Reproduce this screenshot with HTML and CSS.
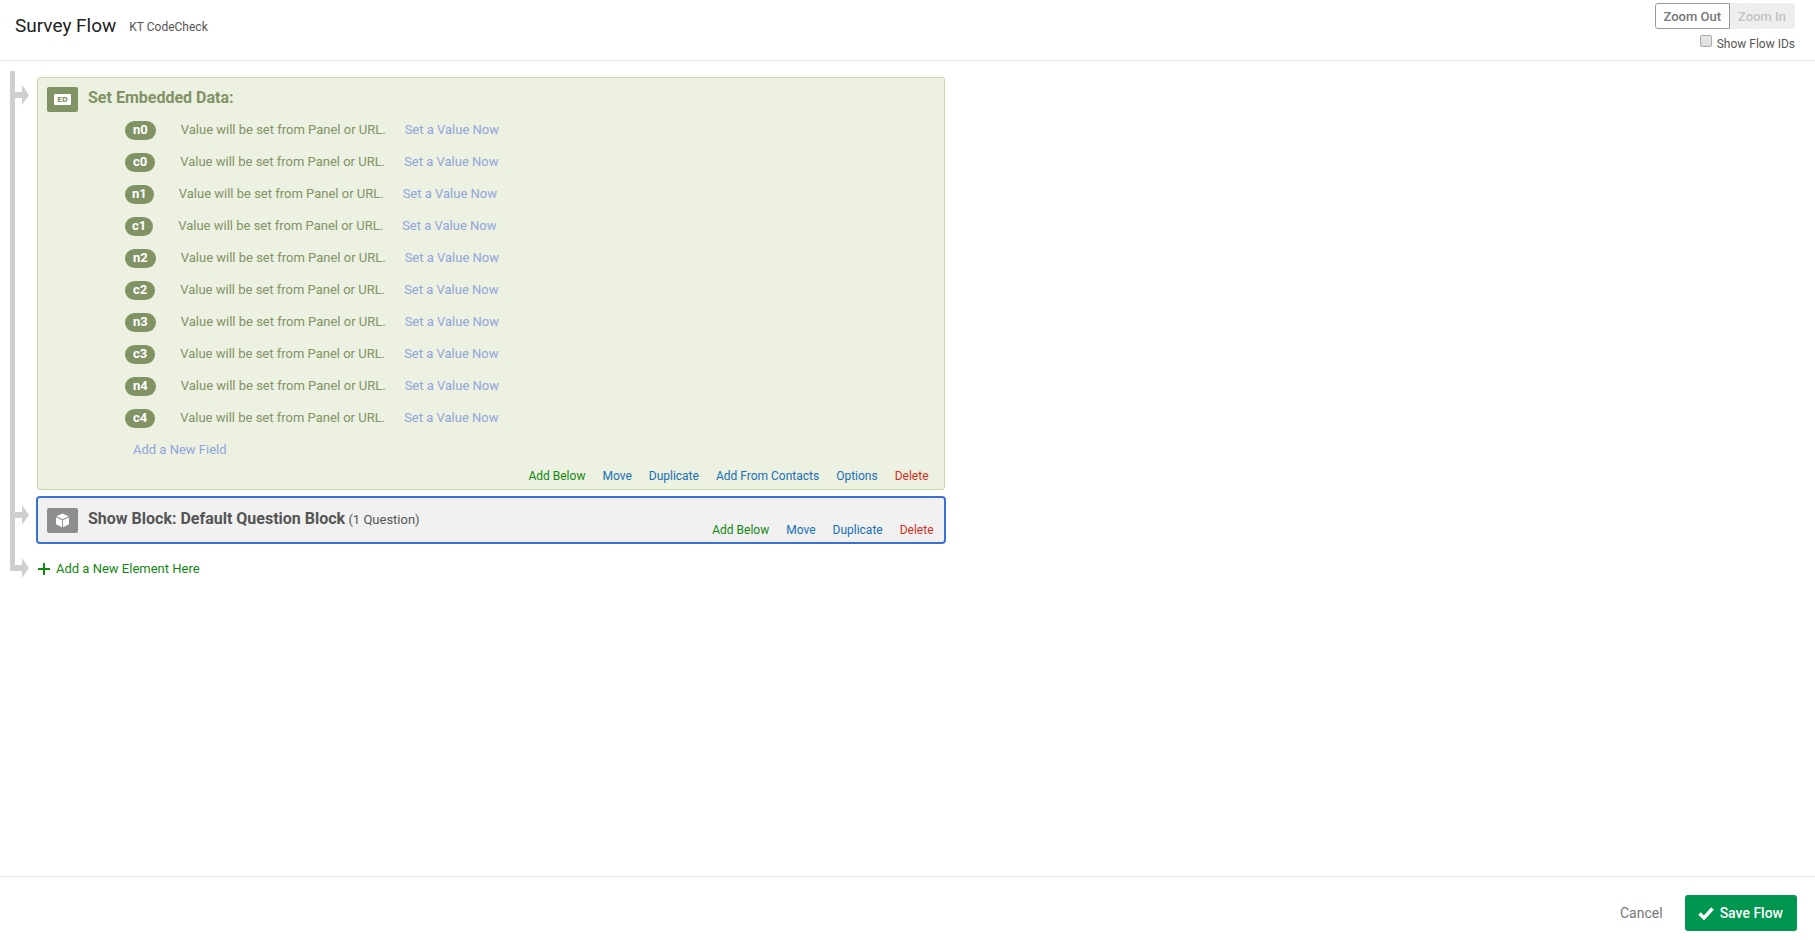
FILE: index.html
```html
<!DOCTYPE html>
<html lang="en">
<head>
<meta charset="utf-8">
<title>Survey Flow</title>
<link rel="stylesheet" href="styles.css">
</head>
<body>
<header class="header">
  <h1 class="title">Survey Flow</h1>
  <span class="survey-name">KT CodeCheck</span>
  <div class="tools">
    <div class="zoom">
      <button class="zoom-btn" type="button">Zoom Out</button>
      <button class="zoom-btn" type="button" disabled>Zoom In</button>
    </div>
    <label class="show-ids" for="ids"><input class="check" type="checkbox" id="ids">Show Flow IDs</label>
  </div>
</header>
<main class="content">
  <ul class="tree">
    <li class="node">
      <div class="rail"><svg class="arrow" width="14" height="20" viewBox="0 0 14 20"><path d="M0 7h7V0l7 10-7 10v-7H0z"/></svg></div>
      <section class="block block-data">
        <div class="block-head">
          <svg class="icon" width="31" height="25" viewBox="0 0 31 25"><rect width="31" height="25" rx="2" fill="#819365"/><rect x="7" y="7" width="17" height="11" rx="1" fill="#fff"/><text class="icon-text" x="15.5" y="15" text-anchor="middle">ED</text></svg>
          <h2 class="block-title">Set Embedded Data:</h2>
        </div>
        <ul class="fields">
          <li class="field"><button class="pill" type="button">n0</button><span class="value">Value will be set from Panel or URL.</span><a class="soft" href="#">Set a Value Now</a></li>
          <li class="field"><button class="pill" type="button">c0</button><span class="value">Value will be set from Panel or URL.</span><a class="soft" href="#">Set a Value Now</a></li>
          <li class="field"><button class="pill pill-narrow" type="button">n1</button><span class="value">Value will be set from Panel or URL.</span><a class="soft" href="#">Set a Value Now</a></li>
          <li class="field"><button class="pill pill-narrow" type="button">c1</button><span class="value">Value will be set from Panel or URL.</span><a class="soft" href="#">Set a Value Now</a></li>
          <li class="field"><button class="pill" type="button">n2</button><span class="value">Value will be set from Panel or URL.</span><a class="soft" href="#">Set a Value Now</a></li>
          <li class="field"><button class="pill" type="button">c2</button><span class="value">Value will be set from Panel or URL.</span><a class="soft" href="#">Set a Value Now</a></li>
          <li class="field"><button class="pill" type="button">n3</button><span class="value">Value will be set from Panel or URL.</span><a class="soft" href="#">Set a Value Now</a></li>
          <li class="field"><button class="pill" type="button">c3</button><span class="value">Value will be set from Panel or URL.</span><a class="soft" href="#">Set a Value Now</a></li>
          <li class="field"><button class="pill" type="button">n4</button><span class="value">Value will be set from Panel or URL.</span><a class="soft" href="#">Set a Value Now</a></li>
          <li class="field"><button class="pill" type="button">c4</button><span class="value">Value will be set from Panel or URL.</span><a class="soft" href="#">Set a Value Now</a></li>
          <li class="field field-new"><a class="soft" href="#">Add a New Field</a></li>
        </ul>
        <nav class="actions">
          <a class="add" href="#">Add Below</a><a href="#">Move</a><a href="#">Duplicate</a><a href="#">Add From Contacts</a><a href="#">Options</a><a class="delete" href="#">Delete</a>
        </nav>
      </section>
    </li>
    <li class="node">
      <div class="rail"><svg class="arrow" width="14" height="20" viewBox="0 0 14 20"><path d="M0 7h7V0l7 10-7 10v-7H0z"/></svg></div>
      <section class="block block-show">
        <div class="block-head">
          <svg class="icon" width="31" height="25" viewBox="0 0 31 25"><rect width="31" height="25" rx="2" fill="#8e8e8e"/><path d="M15.500 5.500L21.500 8.300L15.500 11.300L9.500 8.300z M9 9.300L15 12.200V19.200L9 16.300z M22 9.300L16 12.200V19.200L22 16.300z" fill="#fff"/></svg>
          <h2 class="block-title">Show Block: Default Question Block<span class="count"> (1 Question)</span></h2>
        </div>
        <nav class="actions">
          <a class="add" href="#">Add Below</a><a href="#">Move</a><a href="#">Duplicate</a><a class="delete" href="#">Delete</a>
        </nav>
      </section>
    </li>
    <li class="node node-last">
      <div class="rail"><svg class="arrow" width="14" height="20" viewBox="0 0 14 20"><path d="M0 7h7V0l7 10-7 10v-7H0z"/></svg></div>
      <a class="new-element" href="#"><svg width="12" height="12" viewBox="0 0 12 12"><path d="M5 0h2v5h5v2H7v5H5V7H0V5h5z" fill="#128712"/></svg>Add a New Element Here</a>
    </li>
  </ul>
</main>
<footer class="footer">
  <button class="cancel" type="button">Cancel</button>
  <button class="save" type="button"><svg width="16" height="13" viewBox="0 0 16 13"><path d="M1.500 6.500L6 11L14.500 1.500" fill="none" stroke="#fff" stroke-width="3.400"/></svg>Save Flow</button>
</footer>
</body>
</html>
```
FILE: styles.css
```css
* { box-sizing: border-box; }
body {
  margin: 0;
  min-height: 100vh;
  display: flex;
  flex-direction: column;
  background: #fff;
  color: #555;
  font: 13px/16px Roboto, "Liberation Sans", sans-serif;
}
h1, h2, ul { margin: 0; padding: 0; }
ul { list-style: none; }
button { font: inherit; cursor: pointer; }
a { color: #1970b8; text-decoration: none; }
svg { display: block; flex: none; }

.header {
  display: flex;
  align-items: flex-start;
  padding: 3px 20px 0 15px;
  height: 61px;
  border-bottom: 1px solid #e5e5e5;
}
.title {
  margin: 11px 13px 0 0;
  color: #222;
  font-size: 19px;
  font-weight: 400;
  line-height: 24px;
}
.survey-name { margin-top: 16px; font-size: 12px; }
.tools { margin-left: auto; }
.zoom { display: flex; }
.zoom-btn {
  height: 26px;
  padding: 1px 8px 0;
  border: 1px solid #999;
  border-radius: 3px 0 0 3px;
  background: #fff;
  color: #777;
  font-weight: 500;
}
.zoom-btn:disabled {
  border-color: #eee;
  border-left: 0;
  border-radius: 0 3px 3px 0;
  background: #eee;
  color: #c4c4c4;
}
.show-ids {
  display: flex;
  justify-content: flex-end;
  gap: 5px;
  margin-top: 6px;
  font-size: 12px;
  line-height: 18px;
}
.check {
  appearance: none;
  width: 12px;
  height: 12px;
  margin: 0;
  border: 1px solid #aaa;
  border-radius: 2px;
  background: linear-gradient(#e9e9e9, #dcdcdc);
}

.content { flex: 1; padding: 10px; }
.tree { width: calc(50% + 37px); }
.node { --lead: 7px; display: flex; }
.node:first-child { --lead: 6px; }
.rail {
  flex: none;
  width: 27px;
  border-left: 5px solid #cfcfcf;
}
.arrow { margin-top: calc(var(--lead) + 8px); fill: #cfcfcf; }
.node-last .rail { height: 28px; }

.block {
  flex: 1;
  margin-top: var(--lead);
  border: 1px solid #c8d6ab;
  border-radius: 3px;
}
.block-data { background: #ecf1e1; color: #819365; }
.block-head { display: flex; gap: 10px; padding: 9px 9px 0; }
.block-title { font-size: 16px; font-weight: 700; line-height: 22px; }
.icon-text { fill: #819365; font: 700 7px "DejaVu Sans", sans-serif; }

.fields { margin-top: 2px; padding-left: 87px; }
.field { display: flex; align-items: center; height: 32px; }
.pill {
  height: 19px;
  padding: 0 8px;
  border: 0;
  border-radius: 10px;
  background: #819365;
  color: #fff;
  font-weight: 700;
}
.pill-narrow { padding: 0 7px; }
.value { margin: 0 19px 0 25px; }
.soft { color: #8fa5dc; }
.field-new { padding-left: 8px; }
.actions {
  display: flex;
  justify-content: flex-end;
  gap: 17px;
  padding: 2px 15px 5px;
  font-size: 12px;
}
.add { color: #128712; }
.delete { color: #d4301c; }

.block-show {
  display: flex;
  justify-content: space-between;
  align-items: flex-end;
  height: 46px;
  border-color: #fff;
  background: #f1f1f1;
  outline: 2px solid #3b70d4;
  outline-offset: -1px;
}
.block-show .block-head { align-self: flex-start; padding-top: 10px; }
.block-show .block-title { color: #555; }
.block-show .actions { padding: 0 10px 4px; }
.count { font-size: 13px; font-weight: 400; }
.new-element {
  display: flex;
  gap: 6px;
  align-self: flex-start;
  align-items: center;
  margin: 18px 0 0 1px;
  color: #128712;
}

.footer {
  display: flex;
  justify-content: flex-end;
  align-items: flex-start;
  gap: 22px;
  height: 64px;
  padding: 18px 18px 0;
  border-top: 1px solid #e5e5e5;
}
.cancel, .save { height: 36px; padding: 0; border: 0; background: none; color: #777; font-size: 14px; }
.save {
  display: flex;
  align-items: center;
  gap: 6px;
  padding: 0 14px 0 13px;
  border-radius: 3px;
  background: #00964f;
  color: #fff;
  font-weight: 500;
}
```
